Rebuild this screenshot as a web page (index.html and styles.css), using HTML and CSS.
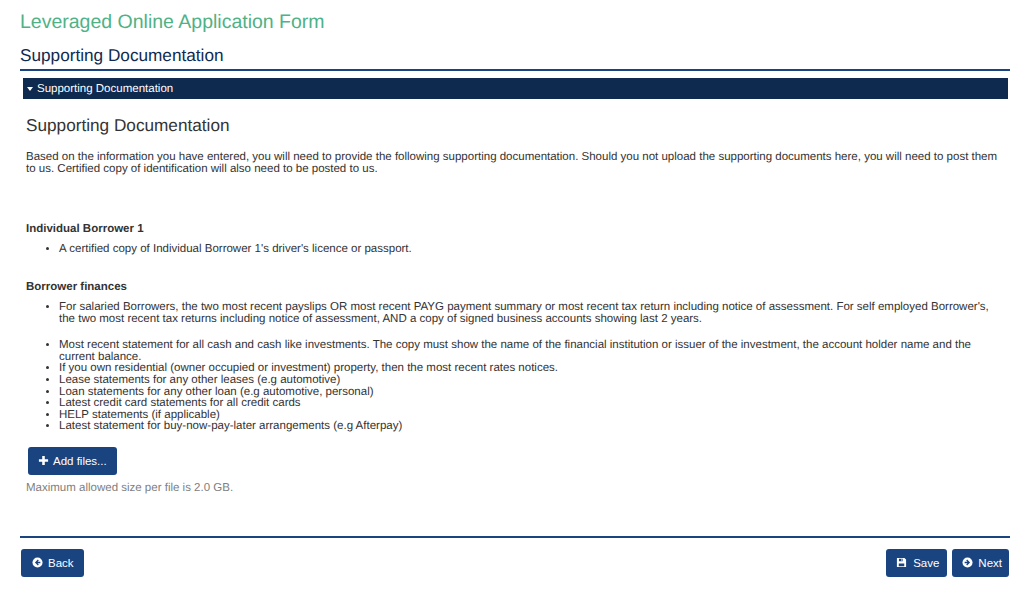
FILE: index.html
```html
<!DOCTYPE html>
<html lang="en">

<head>
  <meta charset="UTF-8" />
  <meta name="viewport" content="width=device-width, initial-scale=1" />
  <title>Leveraged Online Application Form</title>

  <link rel="stylesheet" href="styles.css">
</head>

<body>

  <h1>Leveraged Online Application Form</h1>
  <h2 class="page-title">Supporting Documentation</h2>

  <div class="panel">
    <div class="panel-header"><span class="caret"></span>Supporting Documentation</div>

    <div class="panel-body">
      <h3>Supporting Documentation</h3>

      <p class="intro">Based on the information you have entered, you will need to provide the following supporting documentation. Should you not upload the supporting documents here, you will need to post them to us. Certified copy of identification will also need to be posted to us.</p>

      <div class="doc-title first">Individual Borrower 1</div>
      <ul>
        <li>A certified copy of Individual Borrower 1's driver's licence or passport.</li>
      </ul>

      <div class="doc-title second">Borrower finances</div>
      <ul>
        <li class="spaced">For salaried Borrowers, the two most recent payslips OR most recent PAYG payment summary or most recent tax return including notice of assessment. For self employed Borrower's, the two most recent tax returns including notice of assessment, AND a copy of signed business accounts showing last 2 years.</li>
        <li>Most recent statement for all cash and cash like investments. The copy must show the name of the financial institution or issuer of the investment, the account holder name and the current balance.</li>
        <li>If you own residential (owner occupied or investment) property, then the most recent rates notices.</li>
        <li>Lease statements for any other leases (e.g automotive)</li>
        <li>Loan statements for any other loan (e.g automotive, personal)</li>
        <li>Latest credit card statements for all credit cards</li>
        <li>HELP statements (if applicable)</li>
        <li>Latest statement for buy-now-pay-later arrangements (e.g Afterpay)</li>
      </ul>

      <button type="button" class="btn add-btn">
        <svg class="icon" viewBox="0 0 12 12"><path d="M4.600 1h2.800v3.600H11v2.800H7.400V11H4.600V7.400H1V4.600h3.600z" fill="#fff"/></svg>
        Add files...
      </button>
      <div class="hint">Maximum allowed size per file is 2.0 GB.</div>
    </div>
  </div>

  <div class="footer">
    <button type="button" class="btn back-btn">
      <svg class="icon" viewBox="0 0 12 12"><circle cx="6" cy="6" r="5.500" fill="#fff"/><path d="M6.400 2.800 3.200 6l3.200 3.200 1-1L6.100 6.900h3V5.100h-3l1.300-1.300z" fill="#1a4480"/></svg>
      Back
    </button>
    <div class="footer-right">
      <button type="button" class="btn save-btn">
        <svg class="icon" viewBox="0 0 12 12"><path d="M1 1h8.200L11 2.800V11H1z" fill="#fff"/><path d="M3.200 2h4.200v2.600H3.200zM3 7h6v3H3z" fill="#1a4480"/><path d="M5.800 2.400h1.100v1.800H5.800z" fill="#fff"/></svg>
        Save
      </button>
      <button type="button" class="btn next-btn">
        <svg class="icon" viewBox="0 0 12 12"><circle cx="6" cy="6" r="5.500" fill="#fff"/><path d="M5.600 2.800 8.800 6 5.600 9.200l-1-1 1.300-1.300h-3V5.100h3L4.600 3.800z" fill="#1a4480"/></svg>
        Next
      </button>
    </div>
  </div>

</body>
</html>
```

FILE: styles.css
```css
body {
  font-family: "Liberation Sans", Arial, sans-serif;
  font-size: 11.500px;
  line-height: 11.600px;
  text-rendering: geometricPrecision;
  background: #ffffff;
  margin: 0;
  padding: 0 14px 0 20px;
  color: #333333;
}

h1 {
  margin: 0;
  padding-top: 11px;
  font-size: 19.500px;
  line-height: 22px;
  font-weight: normal;
  color: #4fb286;
}

.page-title {
  margin: 12px 0 0;
  padding-bottom: 4px;
  font-size: 17.200px;
  line-height: 20px;
  font-weight: normal;
  color: #0f2a4f;
  border-bottom: 2px solid #1a4480;
}

.panel {
  margin: 7px 0 0 3px;
  width: 985px;
}

.panel-header {
  display: flex;
  align-items: center;
  height: 21px;
  padding: 2px 0 0 4px;
  box-sizing: border-box;
  background: #0f2a4f;
  color: #ffffff;
}

.caret {
  width: 0;
  height: 0;
  margin: -2px 4px 0 0;
  border-left: 3.500px solid transparent;
  border-right: 3.500px solid transparent;
  border-top: 4px solid #ffffff;
}

.panel-body {
  padding: 0 3px;
}

h3 {
  margin: 0;
  padding-top: 16px;
  font-size: 17.200px;
  line-height: 20px;
  font-weight: normal;
}

.intro {
  margin: 17px 0 0;
}

.doc-title {
  font-weight: bold;
}

.doc-title.first {
  margin-top: 49px;
}

.doc-title.second {
  margin-top: 27px;
}

ul {
  margin: 8px 0 0;
  padding-left: 33px;
}

li.spaced {
  margin-bottom: 15px;
}

.btn {
  display: inline-flex;
  align-items: center;
  height: 28px;
  padding: 0 11px;
  font-family: inherit;
  font-size: 11.500px;
  color: #ffffff;
  background: #1a4480;
  border: none;
  border-radius: 3px;
  cursor: pointer;
}

.icon {
  width: 11px;
  height: 11px;
  margin-right: 6px;
}

.add-btn {
  margin: 14px 0 0 2px;
  padding: 0 10px;
}

.add-btn .icon {
  margin-right: 4px;
}

.back-btn {
  padding: 0 10px 0 11px;
}

.back-btn .icon {
  margin-right: 5px;
}

.save-btn {
  padding: 0 8px 0 10px;
}

.next-btn {
  padding: 0 7px 0 10px;
}

.next-btn .icon {
  margin-right: 5px;
}

.hint {
  margin-top: 8px;
  color: #808080;
}

.footer {
  display: flex;
  justify-content: space-between;
  margin-top: 41px;
  padding: 11px 1px 0;
  border-top: 2px solid #1a4480;
}

.footer-right {
  display: flex;
  gap: 5px;
}
```
